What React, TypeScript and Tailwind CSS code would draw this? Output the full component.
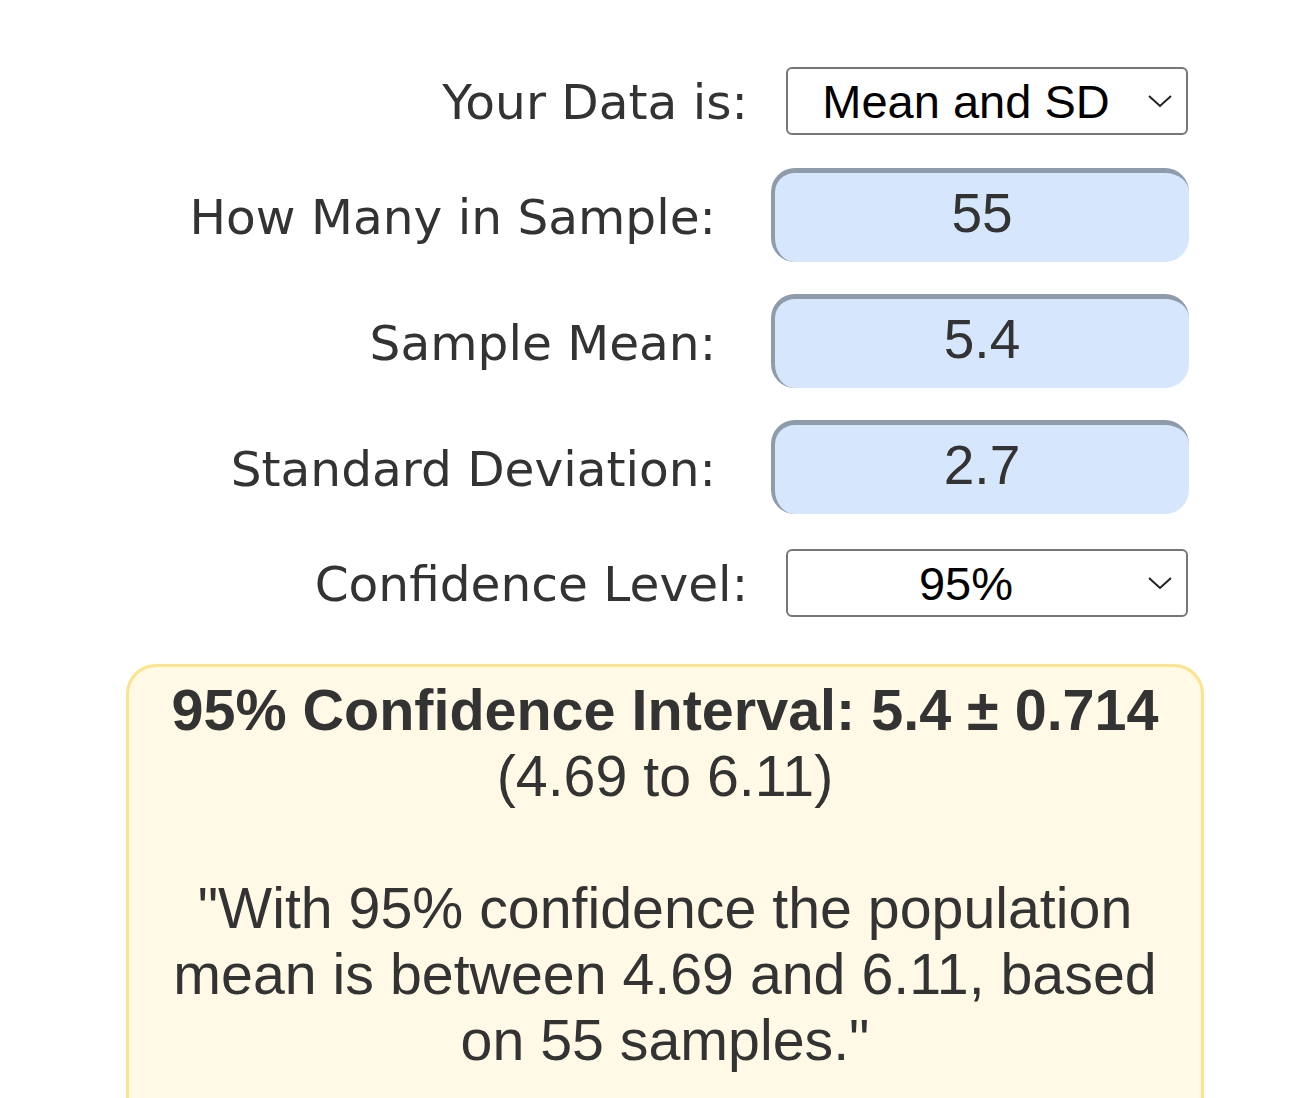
import React from 'react';

const labelFont = { fontFamily: '"DejaVu Sans", Verdana, sans-serif' };
const valueFont = { fontFamily: '"Liberation Sans", Arial, sans-serif' };

const Chevron = () => (
  <svg width="24" height="14" viewBox="0 0 24 14" className="absolute right-[14px] top-1/2 -translate-y-1/2">
    <polyline points="1,2 12,12 23,2" fill="none" stroke="#222" strokeWidth="2" />
  </svg>
);

const SelectRow = ({ label, value, className }: { label: string; value: string; className?: string }) => (
  <div className={`flex items-center ${className ?? ''}`}>
    <div className="w-[748px] pt-[2px] text-right text-[48.6px] leading-none text-[#333]" style={labelFont}>
      {label}
    </div>
    <div className="relative ml-[38px] flex h-[68px] w-[402px] items-center justify-center rounded-[6px] border-2 border-[#767676] bg-white pr-[42px]">
      <span className="text-[47px] leading-none text-black" style={valueFont}>
        {value}
      </span>
      <Chevron />
    </div>
  </div>
);

const InputRow = ({ label, value, className }: { label: string; value: string; className?: string }) => (
  <div className={`flex items-center ${className ?? ''}`}>
    <div className="w-[748px] pt-[5px] pr-[32px] text-right text-[48.6px] leading-none text-[#333]" style={labelFont}>
      {label}
    </div>
    <div className="ml-[23px] flex h-[94px] w-[418px] items-center justify-center rounded-[24px] border-t-[5px] border-l-[4px] border-[#8e9bab] bg-[#d6e7fd] pb-[8px]">
      <span className="text-[55px] leading-none text-[#333]" style={valueFont}>
        {value}
      </span>
    </div>
  </div>
);

export default function App() {
  return (
    <div className="min-h-screen w-full bg-white pt-[67px]">
      <SelectRow label="Your Data is:" value="Mean and SD" />
      <InputRow label="How Many in Sample:" value="55" className="mt-[33px]" />
      <InputRow label="Sample Mean:" value="5.4" className="mt-[32px]" />
      <InputRow label="Standard Deviation:" value="2.7" className="mt-[32px]" />
      <SelectRow label="Confidence Level:" value="95%" className="mt-[35px]" />
      <div
        className="ml-[126px] mt-[47px] w-[1078px] rounded-t-[30px] border-[3px] border-[#fde38c] bg-[#fff9e5] px-[20px] pt-[10px] pb-[60px] text-center text-[57.3px] leading-[66px] text-[#333]"
        style={valueFont}
      >
        <div className="text-[57.5px] font-bold">95% Confidence Interval: 5.4 ± 0.714</div>
        <div>(4.69 to 6.11)</div>
        <div className="h-[66px]" />
        <div>"With 95% confidence the population mean is between 4.69 and 6.11, based on 55 samples."</div>
      </div>
    </div>
  );
}
